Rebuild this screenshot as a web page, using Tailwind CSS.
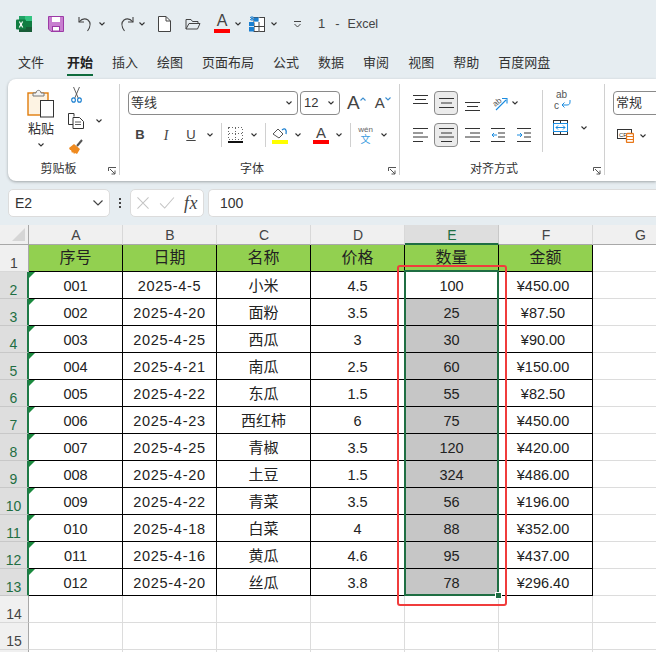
<!DOCTYPE html>
<html><head><meta charset="utf-8"><script src="https://cdn.jsdelivr.net/npm/@tailwindcss/browser@4"></script></head>
<body class="w-[656px] h-[652px] overflow-hidden bg-[#e6edf1] font-['Liberation_Sans','Noto_Sans_CJK_SC',sans-serif] text-[#333]">

<!-- title bar -->
<div class="h-[45px] flex items-center pl-[16px] pt-[3px]">
<svg class="w-[16px] h-[16px]" viewBox="0 0 16 16"><path d="M3 0h13v16H3z" fill="#21a366"/><path d="M9 0h7v5H9z" fill="#33c481"/><path d="M9 5h7v6H9z" fill="#107c41"/><path d="M3 11h13v5H3z" fill="#185c37"/><rect y="3.500" width="10" height="10" rx="1" fill="#107c41"/><path d="M2.800 5.500h1.300L5 7.400 5.900 5.500h1.300L5.800 8.400l1.500 3H6L5 9.400l-1 2H2.700l1.500-3z" fill="#fff"/></svg>
<svg class="ml-[16px] w-[16px] h-[16px]" viewBox="0 0 16 16"><path d="M.5.500h15v15H3l-2.500-2.500z" fill="#c87fd0" stroke="#9c3aa6"/><rect x="4" y="1" width="8" height="5" fill="#fff"/><rect x="4.500" y="10.500" width="7" height="4.500" fill="#fff" stroke="#9c3aa6"/></svg>
<svg class="ml-[14px] w-[16px] h-[16px]" viewBox="0 0 16 16" fill="none" stroke="#444" stroke-width="1.100"><path d="M1 1v5h5"/><path d="M1 6c3-3.500 6-4 9-2 3 2.500 3 6-.5 11"/></svg>
<svg class="ml-[5px] w-[6px] h-[4px]" viewBox="0 0 6 4" fill="none" stroke="#333" stroke-width="1.100"><path d="M.5.500 3 3 5.500.5"/></svg>
<svg class="ml-[13px] w-[16px] h-[16px]" viewBox="0 0 16 16" fill="none" stroke="#444" stroke-width="1.100"><path d="M15 1v5h-5"/><path d="M15 6c-3-3.500-6-4-9-2-3 2.500-3 6 .5 11"/></svg>
<svg class="ml-[5px] w-[6px] h-[4px]" viewBox="0 0 6 4" fill="none" stroke="#333" stroke-width="1.100"><path d="M.5.500 3 3 5.500.5"/></svg>
<svg class="ml-[13px] w-[13px] h-[16px]" viewBox="0 0 13 16" fill="#fff" stroke="#444"><path d="M.5.500h7.500l4.500 4.500v10.500H.5z"/><path d="M8 .5v4.500h4.500" fill="none"/></svg>
<svg class="ml-[14px] w-[16px] h-[16px]" viewBox="0 0 16 16" fill="none" stroke="#444"><path d="M1 13V3.500h5l1.500 2H13v2"/><path d="M1 13l3-5.500h11L12.500 13z"/></svg>
<div class="ml-[13px] w-[16px] h-[18px] flex flex-col items-center"><span class="text-[16px] leading-[14px] text-[#444] mt-[-1px]">A</span><span class="w-[16px] h-[4px] bg-[#f00] mt-[1px]"></span></div>
<svg class="ml-[5px] w-[6px] h-[4px]" viewBox="0 0 6 4" fill="none" stroke="#333" stroke-width="1.100"><path d="M.5.500 3 3 5.500.5"/></svg>
<svg class="ml-[8px] w-[16px] h-[16px]" viewBox="0 0 16 16"><rect x="5" y="1.500" width="10.500" height="14" fill="#fff" stroke="#444"/><path d="M0 6h5v9.500H0z" fill="#1a7fd0"/><path d="M5 1.500h5V6H5z" fill="#1a7fd0"/><path d="M5 6h10M5 10.500h10M10 1.500v14M0 10.500h5" stroke="#fff" stroke-width=".8"/><path d="M10 6v9.500M5 10.500h10" stroke="#444"/><path d="M3 0v5M1 1l4 3M5 1 1 4" stroke="#1a7fd0"/></svg>
<svg class="ml-[6px] w-[6px] h-[4px]" viewBox="0 0 6 4" fill="none" stroke="#333" stroke-width="1.100"><path d="M.5.500 3 3 5.500.5"/></svg>
<svg class="ml-[17px] w-[7px] h-[7px]" viewBox="0 0 7 7" fill="none" stroke="#444"><path d="M0 .5h7M.5 3 3.500 6 6.500 3"/></svg>
<span class="ml-[17px] text-[13px] text-[#444]">1</span>
<span class="ml-[10px] text-[13px] text-[#444]">-</span>
<span class="ml-[8px] text-[12.500px] text-[#444]">Excel</span>
</div>

<!-- tabs -->
<div class="h-[34px] flex gap-[19px] pl-[18px] pt-[8px] text-[13px] leading-[20px] text-[#333]">
<span>文件</span>
<span class="relative ml-[4px] font-bold text-[#222]">开始<span class="absolute left-0 right-0 top-[21px] h-[2px] bg-[#0e6b3d]"></span></span>
<span>插入</span><span>绘图</span><span>页面布局</span><span>公式</span><span>数据</span><span>审阅</span><span>视图</span><span>帮助</span><span>百度网盘</span>
</div>

<!-- ribbon -->
<div class="ml-[8px] h-[102px] rounded-l-[8px] bg-white shadow-[0_1px_3px_rgba(0,0,0,.3)] flex pt-[5px]">

<!-- clipboard -->
<div class="relative w-[112px] h-[91px] border-r border-[#d0d0d0] shrink-0 flex flex-col">
<div class="h-[71px] flex">
<div class="w-[66px] flex flex-col items-center">
<svg class="mt-[4px] w-[28px] h-[30px]" viewBox="0 0 28 30"><rect x="1" y="5" width="20" height="22" fill="#fdf3e3" stroke="#e07c0c" stroke-width="1.400"/><path d="M6 8V5h3c0-3.500 5-3.500 5 0h3v3z" fill="#f3f3f3" stroke="#777"/><rect x="13.500" y="12.500" width="13" height="16.500" fill="#fff" stroke="#333"/></svg>
<span class="text-[13px] leading-[16px] mt-[3px]">粘贴</span>
<svg class="mt-[6px] w-[6px] h-[4px]" viewBox="0 0 6 4" fill="none" stroke="#333" stroke-width="1.100"><path d="M.5.500 3 3 5.500.5"/></svg>
</div>
<div class="flex flex-col">
<svg class="mt-[3px] ml-[-3px] w-[11px] h-[16px]" viewBox="0 0 13 16" preserveAspectRatio="none" fill="none"><path d="M3 0l5.500 11M10 0 4.500 11" stroke="#555"/><circle cx="3" cy="13" r="2.200" stroke="#1a7fd0" stroke-width="1.300"/><circle cx="10" cy="13" r="2.200" stroke="#1a7fd0" stroke-width="1.300"/></svg>
<div class="mt-[10px] flex items-center">
<svg class="ml-[-6px] w-[16px] h-[16px]" viewBox="0 0 16 16" fill="#fff" stroke="#333"><path d="M6 3.500V.5H.5v11H5"/><path d="M5 4.500h6.500l4 4v7H5z"/><path d="M7 9h6M7 11.500h6" stroke-width=".8"/></svg>
<svg class="ml-[12px] w-[6px] h-[4px]" viewBox="0 0 6 4" fill="none" stroke="#333" stroke-width="1.100"><path d="M.5.500 3 3 5.500.5"/></svg>
</div>
<svg class="mt-[10px] ml-[-6px] w-[16px] h-[16px]" viewBox="0 0 16 16"><path d="M1 9l5-4 6 5-3 5-2-1-1 1-1-2-1 1-1-3-1 0z" fill="#ef8a1f"/><path d="M9 7l5-6" stroke="#555" stroke-width="2"/></svg>
</div>
</div>
<div class="h-[20px] text-center pr-[10px] text-[12px] leading-[16px] mt-[6px]">剪贴板</div>
<svg class="absolute right-[3px] bottom-[0px] w-[8px] h-[8px]" viewBox="0 0 8 8" fill="none" stroke="#555"><path d="M.5 4V.5H8M2 2l5 5M7 3.500V7H3.500"/></svg>
</div>

<!-- font -->
<div class="relative w-[280px] h-[91px] border-r border-[#d0d0d0] shrink-0 pt-[7px]">
<div class="flex h-[24px] pl-[8px] items-center">
<div class="w-[170px] h-[24px] rounded-[4px] border border-[#8a8a8a] flex items-center justify-between pl-[2px] pr-[5px] text-[13px]"><span>等线</span><svg class="w-[6px] h-[4px]" viewBox="0 0 6 4" fill="none" stroke="#333" stroke-width="1.100"><path d="M.5.500 3 3 5.500.5"/></svg></div>
<div class="ml-[2px] w-[40px] h-[24px] rounded-[4px] border border-[#8a8a8a] flex items-center justify-between pl-[3px] pr-[5px] text-[13px]"><span>12</span><svg class="w-[6px] h-[4px]" viewBox="0 0 6 4" fill="none" stroke="#333" stroke-width="1.100"><path d="M.5.500 3 3 5.500.5"/></svg></div>
<span class="ml-[7px] text-[19px] leading-[20px] text-[#444]">A</span><svg class="mb-[9px] w-[6px] h-[4px]" viewBox="0 0 6 4" fill="none" stroke="#3b8ed0" stroke-width="1.100"><path d="M.5 3.500 3 1 5.500 3.500"/></svg>
<span class="ml-[9px] text-[15px] leading-[20px] text-[#444]">A</span><svg class="mb-[9px] w-[6px] h-[4px]" viewBox="0 0 6 4" fill="none" stroke="#3b8ed0" stroke-width="1.100"><path d="M.5.500 3 3 5.500.5"/></svg>
</div>
<div class="flex h-[22px] mt-[9px] pl-[14px] items-center">
<span class="w-[12px] text-center text-[13px] font-bold text-[#444]">B</span>
<span class="ml-[14px] w-[12px] text-center text-[14px] italic font-['Liberation_Serif'] text-[#444]">I</span>
<span class="ml-[13px] w-[12px] text-center text-[13px] underline text-[#444]">U</span>
<svg class="ml-[10px] w-[6px] h-[4px]" viewBox="0 0 6 4" fill="none" stroke="#333" stroke-width="1.100"><path d="M.5.500 3 3 5.500.5"/></svg>
<span class="ml-[8px] w-px h-[24px] bg-[#d0d0d0]"></span>
<svg class="ml-[6px] w-[15px] h-[16px]" viewBox="0 0 15 16" fill="none" shape-rendering="crispEdges"><path d="M.5.500h14v12h-14zM7.500.5v12M.5 6.500h14" stroke="#666" stroke-dasharray="1 2"/><path d="M0 15h15" stroke="#111" stroke-width="1.300"/></svg>
<svg class="ml-[8px] w-[6px] h-[4px]" viewBox="0 0 6 4" fill="none" stroke="#333" stroke-width="1.100"><path d="M.5.500 3 3 5.500.5"/></svg>
<span class="ml-[8px] w-px h-[24px] bg-[#d0d0d0]"></span>
<svg class="ml-[6px] w-[16px] h-[18px]" viewBox="0 0 16 18" fill="none"><path d="M1 8l5-5 5 5-4 4z" fill="#fff" stroke="#555"/><path d="M10 4c3-3 5 0 4 4" stroke="#1a7fd0" stroke-width="1.300"/><rect y="14" width="16" height="4" fill="#ff0"/></svg>
<svg class="ml-[7px] w-[6px] h-[4px]" viewBox="0 0 6 4" fill="none" stroke="#333" stroke-width="1.100"><path d="M.5.500 3 3 5.500.5"/></svg>
<div class="ml-[12px] w-[16px] h-[18px] flex flex-col items-center"><span class="text-[15px] leading-[14px] text-[#444]">A</span><span class="w-[16px] h-[4px] bg-[#f00]"></span></div>
<svg class="ml-[7px] w-[6px] h-[4px]" viewBox="0 0 6 4" fill="none" stroke="#333" stroke-width="1.100"><path d="M.5.500 3 3 5.500.5"/></svg>
<span class="ml-[8px] w-px h-[24px] bg-[#d0d0d0]"></span>
<div class="ml-[7px] w-[15px] flex flex-col items-center"><span class="text-[8px] leading-[8px] text-[#666]">wén</span><span class="text-[10px] leading-[11px] text-[#3b9ce0]">文</span></div>
<svg class="ml-[8px] w-[6px] h-[4px]" viewBox="0 0 6 4" fill="none" stroke="#333" stroke-width="1.100"><path d="M.5.500 3 3 5.500.5"/></svg>
</div>
<div class="text-center text-[12px] leading-[16px] mt-[15px] pr-[15px]">字体</div>
<svg class="absolute right-[3px] bottom-[0px] w-[8px] h-[8px]" viewBox="0 0 8 8" fill="none" stroke="#555"><path d="M.5 4V.5H8M2 2l5 5M7 3.500V7H3.500"/></svg>
</div>

<!-- alignment -->
<div class="relative w-[205px] h-[91px] border-r border-[#d0d0d0] shrink-0">
<div class="flex h-[68px]">
<div class="w-[143px] h-[62px] mt-[6px] border-r border-[#d0d0d0] pt-[1px]">
<div class="flex h-[24px] pl-[13px] items-center">
<svg class="mb-[8px] w-[15px] h-[9px]" viewBox="0 0 15 9" stroke="#333"><path d="M0 .5h15M2 4.500h11M0 8.500h15" fill="none"/></svg>
<div class="ml-[6px] w-[24px] h-[24px] rounded-[4px] border border-[#8a8a8a] bg-[#ebebeb] flex items-center justify-center"><svg class="w-[15px] h-[10px]" viewBox="0 0 15 10" stroke="#333"><path d="M0 .5h15M2 5h11M0 9.500h15" fill="none"/></svg></div>
<svg class="ml-[7px] mt-[6px] w-[15px] h-[9px]" viewBox="0 0 15 9" stroke="#333"><path d="M0 .5h15M2 4.500h11M0 8.500h15" fill="none"/></svg>
<svg class="ml-[10px] w-[18px] h-[17px]" viewBox="0 0 18 17" fill="none"><text x="3" y="10" font-size="8" fill="#555" font-family="Liberation Sans" transform="rotate(-40 7 8)">ab</text><path d="M6 15 16 5M12 3.500h5v5" stroke="#1a8ce0" stroke-width="1.100"/></svg>
<svg class="ml-[4px] w-[6px] h-[4px]" viewBox="0 0 6 4" fill="none" stroke="#333" stroke-width="1.100"><path d="M.5.500 3 3 5.500.5"/></svg>
</div>
<div class="flex h-[24px] mt-[8px] pl-[13px] items-center">
<svg class="w-[15px] h-[14px]" viewBox="0 0 15 14" stroke="#333"><path d="M0 .5h15M0 5h10M0 9h15M0 13.500h10" fill="none"/></svg>
<div class="ml-[6px] w-[24px] h-[24px] rounded-[4px] border border-[#8a8a8a] bg-[#ebebeb] flex items-center justify-center"><svg class="w-[15px] h-[14px]" viewBox="0 0 15 14" stroke="#333"><path d="M0 .5h15M2 5h11M0 9h15M2 13.500h11" fill="none"/></svg></div>
<svg class="ml-[7px] w-[15px] h-[14px]" viewBox="0 0 15 14" stroke="#333"><path d="M0 .5h15M5 5h10M0 9h15M5 13.500h10" fill="none"/></svg>
<svg class="ml-[11px] w-[14px] h-[14px]" viewBox="0 0 14 14" fill="none"><path d="M0 .5h14M7 5h7M7 9h7M0 13.500h14" stroke="#333"/><path d="M1 7h5M3 5 1 7l2 2" stroke="#1a8ce0"/></svg>
<svg class="ml-[12px] w-[14px] h-[14px]" viewBox="0 0 14 14" fill="none"><path d="M0 .5h14M7 5h7M7 9h7M0 13.500h14" stroke="#333"/><path d="M0 7h5M3 5l2 2-2 2" stroke="#1a8ce0"/></svg>
</div>
</div>
<div class="flex flex-col">
<div class="ml-[11px] mt-[5px] w-[17px] h-[23px] flex items-start">
<div class="text-[10px] leading-[11px] text-[#555]"><div class="pl-[2px]">ab</div><div>c</div></div>
<svg class="ml-[-6px] mt-[11px] w-[10px] h-[8px] shrink-0" viewBox="0 0 10 8" fill="none" stroke="#1a8ce0"><path d="M9 0v2c0 2-1 3-3 3H1M3.500 2.500 1 5l2.500 2.500"/></svg>
</div>
<div class="mt-[8px] flex items-center">
<svg class="ml-[10px] w-[15px] h-[15px]" viewBox="0 0 15 15" fill="none" shape-rendering="crispEdges"><path d="M.5.500h14v14H.5z" stroke="#333"/><path d="M7.500 .5v3M7.500 11.500v3" stroke="#333"/><rect x=".5" y="3.500" width="14" height="8" stroke="#1a8ce0" fill="#fff"/><path d="M3 7.500h9" stroke="#1a8ce0"/><path d="M5 5.500l-2 2 2 2M10 5.500l2 2-2 2" stroke="#1a8ce0" shape-rendering="auto"/></svg>
<svg class="ml-[13px] w-[6px] h-[4px]" viewBox="0 0 6 4" fill="none" stroke="#333" stroke-width="1.100"><path d="M.5.500 3 3 5.500.5"/></svg>
</div>
</div>
</div>
<div class="text-center text-[12px] leading-[16px] mt-[9px] pr-[16px]">对齐方式</div>
<svg class="absolute right-[3px] bottom-[0px] w-[8px] h-[8px]" viewBox="0 0 8 8" fill="none" stroke="#555"><path d="M.5 4V.5H8M2 2l5 5M7 3.500V7H3.500"/></svg>
</div>

<!-- number -->
<div class="pl-[8px] pt-[7px] flex-1 overflow-hidden">
<div class="w-[60px] h-[24px] rounded-[4px] border border-[#8a8a8a] pl-[2px] text-[13px] leading-[22px]">常规</div>
<div class="mt-[14px] flex items-center">
<svg class="ml-[4px] w-[17px] h-[14px]" viewBox="0 0 17 14" fill="none"><rect x=".5" y=".5" width="14" height="9" stroke="#333"/><text x="2" y="7.500" font-size="6" fill="#333" font-family="Liberation Sans">CF</text><rect x="9.500" y="4.500" width="7" height="9" rx="1" fill="#fff" stroke="#e8781a" stroke-width="1.300"/><path d="M10 7.500h6M10 10.500h6" stroke="#e8781a"/></svg>
<svg class="ml-[6px] w-[6px] h-[4px]" viewBox="0 0 6 4" fill="none" stroke="#333" stroke-width="1.100"><path d="M.5.500 3 3 5.500.5"/></svg>
</div>
</div>
</div>

<!-- formula bar -->
<div class="flex items-center h-[28px] mt-[8px] pl-[8px]">
<div class="w-[102px] h-[28px] rounded-[5px] bg-white border border-[#dcdcdc] flex items-center justify-between pl-[6px] pr-[6px] text-[14px]"><span>E2</span><svg class="w-[10px] h-[6px]" viewBox="0 0 10 6" fill="none" stroke="#444" stroke-width="1.200"><path d="M.5.500 5 5 9.500.5"/></svg></div>
<div class="w-[20px] flex flex-col items-center gap-[2px]"><span class="w-[2px] h-[2px] bg-[#444]"></span><span class="w-[2px] h-[2px] bg-[#444]"></span><span class="w-[2px] h-[2px] bg-[#444]"></span></div>
<div class="w-[74px] h-[28px] rounded-[5px] bg-white border border-[#dcdcdc] flex items-center pl-[6px]">
<svg class="w-[12px] h-[12px]" viewBox="0 0 13 13" fill="none" stroke="#c4c4c4" stroke-width="1.100"><path d="M.5.500l12 12M12.500.5l-12 12"/></svg>
<svg class="ml-[10px] w-[16px] h-[12px]" viewBox="0 0 16 13" fill="none" stroke="#c4c4c4" stroke-width="1.100"><path d="M.5 7l5 5L15.500.5"/></svg>
<span class="ml-[9px] font-['Liberation_Serif'] italic text-[18px] leading-[16px] tracking-[.5px] text-[#444]">fx</span>
</div>
<div class="ml-[4px] flex-1 h-[28px] rounded-l-[5px] bg-white border border-r-0 border-[#dcdcdc] pl-[11px] text-[14px] leading-[26px]">100</div>
</div>

<!-- sheet -->
<div class="relative mt-[8px] w-[656px] h-[427px] overflow-hidden bg-white grid grid-cols-[29px_94px_94px_94px_94px_94px_94px_94px] auto-rows-[27px] grid-rows-[20px] text-[14.500px] text-[#222] text-center">
<!-- column headers -->
<div class="relative bg-[#f0f0f0] border-r border-b border-[#a8a8a8]"><svg class="absolute right-[3px] bottom-[3px] w-[13px] h-[13px]" viewBox="0 0 13 13"><path d="M13 0v13H0z" fill="#d6d6d6"/></svg></div>
<div class="bg-[#f0f0f0] border-r border-b border-r-[#d8d8d8] border-b-[#a8a8a8] text-[#444] text-[14px] leading-[20px] pl-[1px]">A</div>
<div class="bg-[#f0f0f0] border-r border-b border-r-[#d8d8d8] border-b-[#a8a8a8] text-[#444] text-[14px] leading-[20px] pl-[1px]">B</div>
<div class="bg-[#f0f0f0] border-r border-b border-r-[#d8d8d8] border-b-[#a8a8a8] text-[#444] text-[14px] leading-[20px] pl-[1px]">C</div>
<div class="bg-[#f0f0f0] border-r border-b border-r-[#d8d8d8] border-b-[#a8a8a8] text-[#444] text-[14px] leading-[20px] pl-[1px]">D</div>
<div class="bg-[#dedede] border-r border-b-2 border-r-[#c8c8c8] border-b-[#1f6e43] text-[#1f6e43] text-[14px] leading-[20px] pl-[1px]">E</div>
<div class="bg-[#f0f0f0] border-r border-b border-r-[#d8d8d8] border-b-[#a8a8a8] text-[#444] text-[14px] leading-[20px] pl-[1px]">F</div>
<div class="bg-[#f0f0f0] border-b border-[#a8a8a8] text-[#444] text-[14px] leading-[20px] pl-[1px]">G</div>
<!-- row 1 -->
<div class="bg-[#f0f0f0] border-r border-b border-r-[#a8a8a8] border-b-[#d8d8d8] text-[#444] text-[14px] leading-[25px] pt-[6px]">1</div>
<div class="bg-[#92d050] border-r border-b border-black text-[16px] leading-[25px]">序号</div>
<div class="bg-[#92d050] border-r border-b border-black text-[16px] leading-[25px]">日期</div>
<div class="bg-[#92d050] border-r border-b border-black text-[16px] leading-[25px]">名称</div>
<div class="bg-[#92d050] border-r border-b border-black text-[16px] leading-[25px]">价格</div>
<div class="bg-[#92d050] border-r border-b border-black text-[16px] leading-[25px]">数量</div>
<div class="bg-[#92d050] border-r border-b border-black text-[16px] leading-[25px]">金额</div>
<div class="border-b border-[#dcdcdc]"></div>
<!-- row 2 -->
<div class="bg-[#dedede] border-r-2 border-b border-r-[#1f7a47] border-b-[#c8c8c8] text-[#1f6e43] text-[14px] leading-[25px] pt-[6px]">2</div>
<div class="relative border-r border-b border-black leading-[26px] pt-[1px]"><span class="absolute left-0 top-0 w-[6px] h-[6px] bg-[#1a8a3e] [clip-path:polygon(0_0,100%_0,0_100%)]"></span>001</div>
<div class="border-r border-b border-black leading-[26px] pt-[1px] tracking-[.7px]">2025-4-5</div>
<div class="border-r border-b border-black leading-[26px] pt-[1px] text-[15px]">小米</div>
<div class="border-r border-b border-black leading-[26px] pt-[1px]">4.5</div>
<div class="border-r border-b border-black leading-[26px] pt-[1px]">100</div>
<div class="border-r border-b border-black leading-[26px] pt-[1px] pr-[5px]">¥450.00</div>
<div class="border-b border-[#dcdcdc]"></div>
<!-- row 3 -->
<div class="bg-[#dedede] border-r-2 border-b border-r-[#1f7a47] border-b-[#c8c8c8] text-[#1f6e43] text-[14px] leading-[25px] pt-[6px]">3</div>
<div class="relative border-r border-b border-black leading-[26px] pt-[1px]"><span class="absolute left-0 top-0 w-[6px] h-[6px] bg-[#1a8a3e] [clip-path:polygon(0_0,100%_0,0_100%)]"></span>002</div>
<div class="border-r border-b border-black leading-[26px] pt-[1px] tracking-[.7px]">2025-4-20</div>
<div class="border-r border-b border-black leading-[26px] pt-[1px] text-[15px]">面粉</div>
<div class="border-r border-b border-black leading-[26px] pt-[1px]">3.5</div>
<div class="bg-[#c6c6c6] border-r border-b border-black leading-[26px] pt-[1px]">25</div>
<div class="border-r border-b border-black leading-[26px] pt-[1px] pr-[5px]">¥87.50</div>
<div class="border-b border-[#dcdcdc]"></div>
<!-- row 4 -->
<div class="bg-[#dedede] border-r-2 border-b border-r-[#1f7a47] border-b-[#c8c8c8] text-[#1f6e43] text-[14px] leading-[25px] pt-[6px]">4</div>
<div class="relative border-r border-b border-black leading-[26px] pt-[1px]"><span class="absolute left-0 top-0 w-[6px] h-[6px] bg-[#1a8a3e] [clip-path:polygon(0_0,100%_0,0_100%)]"></span>003</div>
<div class="border-r border-b border-black leading-[26px] pt-[1px] tracking-[.7px]">2025-4-25</div>
<div class="border-r border-b border-black leading-[26px] pt-[1px] text-[15px]">西瓜</div>
<div class="border-r border-b border-black leading-[26px] pt-[1px]">3</div>
<div class="bg-[#c6c6c6] border-r border-b border-black leading-[26px] pt-[1px]">30</div>
<div class="border-r border-b border-black leading-[26px] pt-[1px] pr-[5px]">¥90.00</div>
<div class="border-b border-[#dcdcdc]"></div>
<!-- row 5 -->
<div class="bg-[#dedede] border-r-2 border-b border-r-[#1f7a47] border-b-[#c8c8c8] text-[#1f6e43] text-[14px] leading-[25px] pt-[6px]">5</div>
<div class="relative border-r border-b border-black leading-[26px] pt-[1px]"><span class="absolute left-0 top-0 w-[6px] h-[6px] bg-[#1a8a3e] [clip-path:polygon(0_0,100%_0,0_100%)]"></span>004</div>
<div class="border-r border-b border-black leading-[26px] pt-[1px] tracking-[.7px]">2025-4-21</div>
<div class="border-r border-b border-black leading-[26px] pt-[1px] text-[15px]">南瓜</div>
<div class="border-r border-b border-black leading-[26px] pt-[1px]">2.5</div>
<div class="bg-[#c6c6c6] border-r border-b border-black leading-[26px] pt-[1px]">60</div>
<div class="border-r border-b border-black leading-[26px] pt-[1px] pr-[5px]">¥150.00</div>
<div class="border-b border-[#dcdcdc]"></div>
<!-- row 6 -->
<div class="bg-[#dedede] border-r-2 border-b border-r-[#1f7a47] border-b-[#c8c8c8] text-[#1f6e43] text-[14px] leading-[25px] pt-[6px]">6</div>
<div class="relative border-r border-b border-black leading-[26px] pt-[1px]"><span class="absolute left-0 top-0 w-[6px] h-[6px] bg-[#1a8a3e] [clip-path:polygon(0_0,100%_0,0_100%)]"></span>005</div>
<div class="border-r border-b border-black leading-[26px] pt-[1px] tracking-[.7px]">2025-4-22</div>
<div class="border-r border-b border-black leading-[26px] pt-[1px] text-[15px]">东瓜</div>
<div class="border-r border-b border-black leading-[26px] pt-[1px]">1.5</div>
<div class="bg-[#c6c6c6] border-r border-b border-black leading-[26px] pt-[1px]">55</div>
<div class="border-r border-b border-black leading-[26px] pt-[1px] pr-[5px]">¥82.50</div>
<div class="border-b border-[#dcdcdc]"></div>
<!-- row 7 -->
<div class="bg-[#dedede] border-r-2 border-b border-r-[#1f7a47] border-b-[#c8c8c8] text-[#1f6e43] text-[14px] leading-[25px] pt-[6px]">7</div>
<div class="relative border-r border-b border-black leading-[26px] pt-[1px]"><span class="absolute left-0 top-0 w-[6px] h-[6px] bg-[#1a8a3e] [clip-path:polygon(0_0,100%_0,0_100%)]"></span>006</div>
<div class="border-r border-b border-black leading-[26px] pt-[1px] tracking-[.7px]">2025-4-23</div>
<div class="border-r border-b border-black leading-[26px] pt-[1px] text-[15px]">西红柿</div>
<div class="border-r border-b border-black leading-[26px] pt-[1px]">6</div>
<div class="bg-[#c6c6c6] border-r border-b border-black leading-[26px] pt-[1px]">75</div>
<div class="border-r border-b border-black leading-[26px] pt-[1px] pr-[5px]">¥450.00</div>
<div class="border-b border-[#dcdcdc]"></div>
<!-- row 8 -->
<div class="bg-[#dedede] border-r-2 border-b border-r-[#1f7a47] border-b-[#c8c8c8] text-[#1f6e43] text-[14px] leading-[25px] pt-[6px]">8</div>
<div class="relative border-r border-b border-black leading-[26px] pt-[1px]"><span class="absolute left-0 top-0 w-[6px] h-[6px] bg-[#1a8a3e] [clip-path:polygon(0_0,100%_0,0_100%)]"></span>007</div>
<div class="border-r border-b border-black leading-[26px] pt-[1px] tracking-[.7px]">2025-4-25</div>
<div class="border-r border-b border-black leading-[26px] pt-[1px] text-[15px]">青椒</div>
<div class="border-r border-b border-black leading-[26px] pt-[1px]">3.5</div>
<div class="bg-[#c6c6c6] border-r border-b border-black leading-[26px] pt-[1px]">120</div>
<div class="border-r border-b border-black leading-[26px] pt-[1px] pr-[5px]">¥420.00</div>
<div class="border-b border-[#dcdcdc]"></div>
<!-- row 9 -->
<div class="bg-[#dedede] border-r-2 border-b border-r-[#1f7a47] border-b-[#c8c8c8] text-[#1f6e43] text-[14px] leading-[25px] pt-[6px]">9</div>
<div class="relative border-r border-b border-black leading-[26px] pt-[1px]"><span class="absolute left-0 top-0 w-[6px] h-[6px] bg-[#1a8a3e] [clip-path:polygon(0_0,100%_0,0_100%)]"></span>008</div>
<div class="border-r border-b border-black leading-[26px] pt-[1px] tracking-[.7px]">2025-4-20</div>
<div class="border-r border-b border-black leading-[26px] pt-[1px] text-[15px]">土豆</div>
<div class="border-r border-b border-black leading-[26px] pt-[1px]">1.5</div>
<div class="bg-[#c6c6c6] border-r border-b border-black leading-[26px] pt-[1px]">324</div>
<div class="border-r border-b border-black leading-[26px] pt-[1px] pr-[5px]">¥486.00</div>
<div class="border-b border-[#dcdcdc]"></div>
<!-- row 10 -->
<div class="bg-[#dedede] border-r-2 border-b border-r-[#1f7a47] border-b-[#c8c8c8] text-[#1f6e43] text-[14px] leading-[25px] pt-[6px]">10</div>
<div class="relative border-r border-b border-black leading-[26px] pt-[1px]"><span class="absolute left-0 top-0 w-[6px] h-[6px] bg-[#1a8a3e] [clip-path:polygon(0_0,100%_0,0_100%)]"></span>009</div>
<div class="border-r border-b border-black leading-[26px] pt-[1px] tracking-[.7px]">2025-4-22</div>
<div class="border-r border-b border-black leading-[26px] pt-[1px] text-[15px]">青菜</div>
<div class="border-r border-b border-black leading-[26px] pt-[1px]">3.5</div>
<div class="bg-[#c6c6c6] border-r border-b border-black leading-[26px] pt-[1px]">56</div>
<div class="border-r border-b border-black leading-[26px] pt-[1px] pr-[5px]">¥196.00</div>
<div class="border-b border-[#dcdcdc]"></div>
<!-- row 11 -->
<div class="bg-[#dedede] border-r-2 border-b border-r-[#1f7a47] border-b-[#c8c8c8] text-[#1f6e43] text-[14px] leading-[25px] pt-[6px]">11</div>
<div class="relative border-r border-b border-black leading-[26px] pt-[1px]"><span class="absolute left-0 top-0 w-[6px] h-[6px] bg-[#1a8a3e] [clip-path:polygon(0_0,100%_0,0_100%)]"></span>010</div>
<div class="border-r border-b border-black leading-[26px] pt-[1px] tracking-[.7px]">2025-4-18</div>
<div class="border-r border-b border-black leading-[26px] pt-[1px] text-[15px]">白菜</div>
<div class="border-r border-b border-black leading-[26px] pt-[1px]">4</div>
<div class="bg-[#c6c6c6] border-r border-b border-black leading-[26px] pt-[1px]">88</div>
<div class="border-r border-b border-black leading-[26px] pt-[1px] pr-[5px]">¥352.00</div>
<div class="border-b border-[#dcdcdc]"></div>
<!-- row 12 -->
<div class="bg-[#dedede] border-r-2 border-b border-r-[#1f7a47] border-b-[#c8c8c8] text-[#1f6e43] text-[14px] leading-[25px] pt-[6px]">12</div>
<div class="relative border-r border-b border-black leading-[26px] pt-[1px]"><span class="absolute left-0 top-0 w-[6px] h-[6px] bg-[#1a8a3e] [clip-path:polygon(0_0,100%_0,0_100%)]"></span>011</div>
<div class="border-r border-b border-black leading-[26px] pt-[1px] tracking-[.7px]">2025-4-16</div>
<div class="border-r border-b border-black leading-[26px] pt-[1px] text-[15px]">黄瓜</div>
<div class="border-r border-b border-black leading-[26px] pt-[1px]">4.6</div>
<div class="bg-[#c6c6c6] border-r border-b border-black leading-[26px] pt-[1px]">95</div>
<div class="border-r border-b border-black leading-[26px] pt-[1px] pr-[5px]">¥437.00</div>
<div class="border-b border-[#dcdcdc]"></div>
<!-- row 13 -->
<div class="bg-[#dedede] border-r-2 border-b border-r-[#1f7a47] border-b-[#c8c8c8] text-[#1f6e43] text-[14px] leading-[25px] pt-[6px]">13</div>
<div class="relative border-r border-b border-black leading-[26px] pt-[1px]"><span class="absolute left-0 top-0 w-[6px] h-[6px] bg-[#1a8a3e] [clip-path:polygon(0_0,100%_0,0_100%)]"></span>012</div>
<div class="border-r border-b border-black leading-[26px] pt-[1px] tracking-[.7px]">2025-4-20</div>
<div class="border-r border-b border-black leading-[26px] pt-[1px] text-[15px]">丝瓜</div>
<div class="border-r border-b border-black leading-[26px] pt-[1px]">3.8</div>
<div class="bg-[#c6c6c6] border-r border-b border-black leading-[26px] pt-[1px]">78</div>
<div class="border-r border-b border-black leading-[26px] pt-[1px] pr-[5px]">¥296.40</div>
<div class="border-b border-[#dcdcdc]"></div>
<!-- row 14 -->
<div class="bg-[#f0f0f0] border-r border-b border-r-[#a8a8a8] border-b-[#d8d8d8] text-[#444] text-[14px] leading-[25px] pt-[6px]">14</div>
<div class="border-r border-b border-[#dcdcdc]"></div><div class="border-r border-b border-[#dcdcdc]"></div><div class="border-r border-b border-[#dcdcdc]"></div><div class="border-r border-b border-[#dcdcdc]"></div><div class="border-r border-b border-[#dcdcdc]"></div><div class="border-r border-b border-[#dcdcdc]"></div><div class="border-b border-[#dcdcdc]"></div>
<!-- row 15 -->
<div class="bg-[#f0f0f0] border-r border-b border-r-[#a8a8a8] border-b-[#d8d8d8] text-[#444] text-[14px] leading-[25px] pt-[6px]">15</div>
<div class="border-r border-b border-[#dcdcdc]"></div><div class="border-r border-b border-[#dcdcdc]"></div><div class="border-r border-b border-[#dcdcdc]"></div><div class="border-r border-b border-[#dcdcdc]"></div><div class="border-r border-b border-[#dcdcdc]"></div><div class="border-r border-b border-[#dcdcdc]"></div><div class="border-b border-[#dcdcdc]"></div>
<!-- row 16 -->
<div class="bg-[#f0f0f0] border-r border-r-[#a8a8a8]"></div>
<div class="border-r border-[#dcdcdc]"></div><div class="border-r border-[#dcdcdc]"></div><div class="border-r border-[#dcdcdc]"></div><div class="border-r border-[#dcdcdc]"></div><div class="border-r border-[#dcdcdc]"></div><div class="border-r border-[#dcdcdc]"></div><div></div>

<!-- selection overlay -->
<div class="absolute left-[404px] top-[45px] w-[95px] h-[326px] border-2 border-[#1f6e43]"></div>
<div class="absolute left-[496px] top-[368px] w-[5px] h-[5px] bg-[#1f6e43] outline outline-1 outline-white"></div>
<!-- red annotation -->
<div class="absolute left-[397px] top-[40px] w-[110px] h-[341px] border-2 border-[#f03c3c] rounded-[3px]"></div>
</div>
</body></html>
